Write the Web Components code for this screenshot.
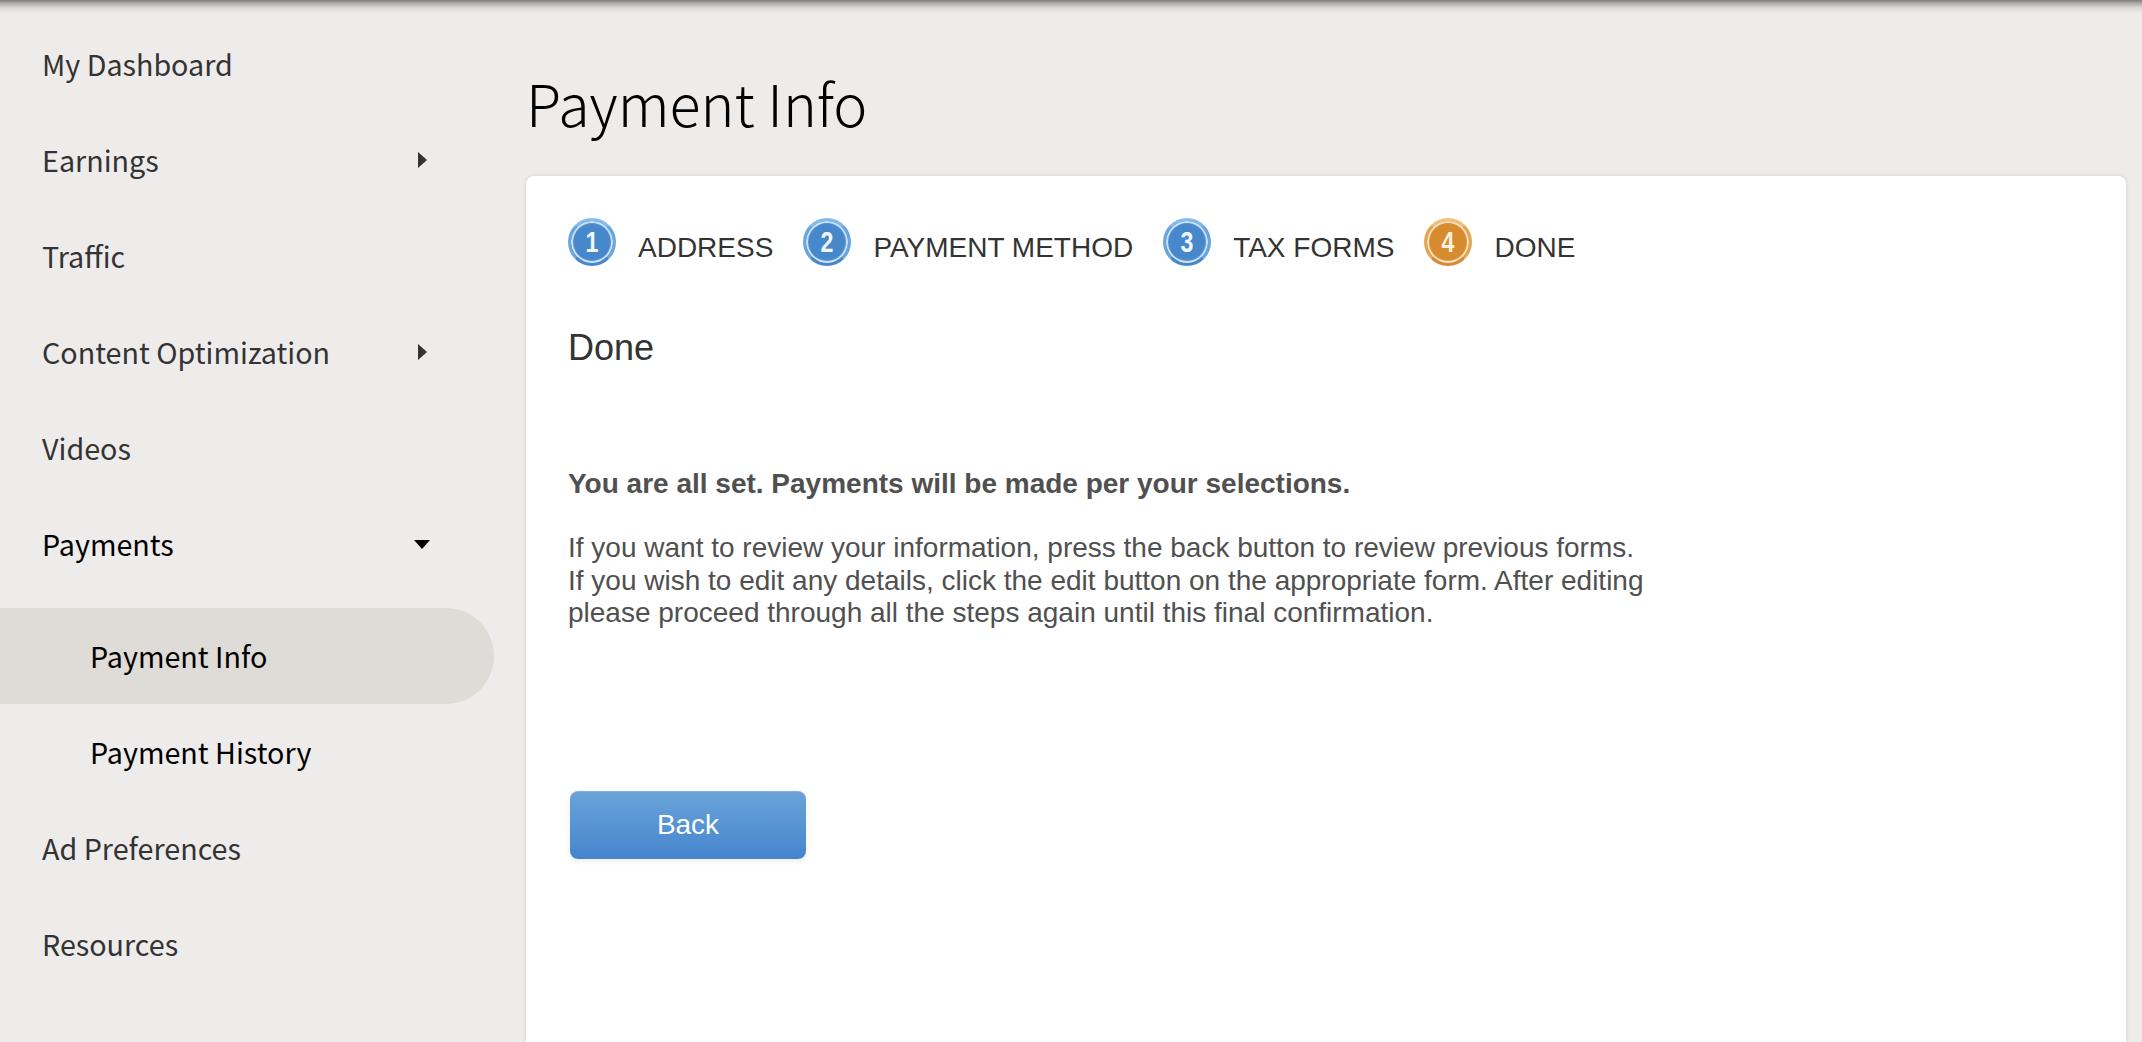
<!DOCTYPE html>
<html>
<head>
<meta charset="utf-8">
<title>Payment Info</title>
<style>
  html, body { margin: 0; height: 100%; overflow: hidden; background: #eeeceb; }
</style>
</head>
<body>
<app-shell>
  <side-nav slot="nav">
    <nav-item>My Dashboard</nav-item>
    <nav-item arrow="right">Earnings</nav-item>
    <nav-item>Traffic</nav-item>
    <nav-item arrow="right">Content Optimization</nav-item>
    <nav-item>Videos</nav-item>
    <nav-item arrow="down" open>Payments</nav-item>
    <nav-item sub active>Payment Info</nav-item>
    <nav-item sub>Payment History</nav-item>
    <nav-item>Ad Preferences</nav-item>
    <nav-item>Resources</nav-item>
  </side-nav>
  <page-title>Payment Info</page-title>
  <content-card>
    <step-bar>
      <step-item num="1">ADDRESS</step-item>
      <step-item num="2">PAYMENT METHOD</step-item>
      <step-item num="3">TAX FORMS</step-item>
      <step-item num="4" current>DONE</step-item>
    </step-bar>
    <done-message></done-message>
    <blue-button>Back</blue-button>
  </content-card>
</app-shell>
<script>
  function define(name, css, html, setup) {
    customElements.define(name, class extends HTMLElement {
      constructor() {
        super();
        const root = this.attachShadow({ mode: "open" });
        root.innerHTML = `<style>${css}</style>${html}`;
      }
      connectedCallback() {
        if (setup) setup(this);
      }
    });
  }

  define("app-shell", `
    :host { display: block; position: relative; height: 1042px; overflow: hidden; }
    .topshadow {
      position: absolute; left: 0; right: 0; top: 0; height: 14px;
      background: linear-gradient(#7d7d7d 0, #aaa9a8 3px, #dcdbda 8px, #eeeceb 14px);
    }
    .wrap { display: flex; height: 100%; }
    .side { width: 526px; flex: none; padding-top: 16px; box-sizing: border-box; }
    .main { flex: 1; padding-right: 16px; min-width: 0; }
  `, `
    <div class="topshadow"></div>
    <div class="wrap">
      <div class="side"><slot name="nav"></slot></div>
      <div class="main"><slot></slot></div>
    </div>
  `);

  define("side-nav", `:host { display: block; }`, `<slot></slot>`);

  define("nav-item", `
    :host {
      display: flex; align-items: center; justify-content: space-between;
      height: 96px; width: 494px; box-sizing: border-box;
      padding: 0 66px 2px 42px;
      font: 400 28.7px "Noto Sans CJK SC", "Open Sans", sans-serif;
      color: #333;
    }
    :host([open]) { color: #000; margin-bottom: 16px; }
    :host([sub]) { padding-left: 90px; color: #000; }
    :host([active]) { background: #dfdbd6; border-radius: 0 48px 48px 0; }
    .a { display: none; width: 0; height: 0; margin-top: 2px; border-style: solid; border-color: transparent; }
    :host([arrow="right"]) .a {
      display: block; border-width: 8px 0 8px 9px; border-left-color: #333; margin-right: 1px;
    }
    :host([arrow="down"]) .a {
      display: block; border-width: 9px 8px 0 8px; border-top-color: #000; margin-right: -2px;
    }
  `, `<slot></slot><span class="a"></span>`);

  define("page-title", `
    :host {
      display: flex; align-items: center; height: 176px; padding-top: 28px; box-sizing: border-box;
      font: 300 57.4px "Noto Sans CJK SC", "Open Sans", sans-serif; color: #000;
    }
  `, `<slot></slot>`);

  define("content-card", `
    :host {
      display: block; background: #fff; border-radius: 8px 8px 0 0; height: 866px;
      box-sizing: border-box; padding: 42px 42px 0 42px;
      box-shadow: 0 0 4px rgba(0,0,0,.12);
      font-family: "Liberation Sans", Arial, sans-serif;
    }
  `, `<slot></slot>`);

  define("step-bar", `
    :host { display: flex; align-items: center; gap: 30px; height: 48px; }
  `, `<slot></slot>`);

  define("step-item", `
    :host {
      display: flex; align-items: center; gap: 22px;
      font-size: 28px; color: #333; white-space: nowrap;
    }
    .dot {
      width: 48px; height: 48px; border-radius: 50%; box-sizing: border-box; flex: none;
      background: #4788cc;
      border: 3px solid; border-color: #86bcec #69a6e0 #4788cc;
      box-shadow: inset 0 0 1px 2px #d4e6f7;
      display: flex; align-items: center; justify-content: center;
      color: #f0f6fc; font: 700 29px/1 "Liberation Sans", sans-serif;
    }
    .dot b { display: block; transform: scaleX(.8); }
    :host([current]) .dot {
      background: #d68b2f; border-color: #eec27c #e3a650 #d68b2f;
      box-shadow: inset 0 0 1px 2px #f8e6c9;
      color: #fbf1e0;
    }
    .label { padding-top: 12px; }
  `, `<span class="dot"><b></b></span><span class="label"><slot></slot></span>`, el => {
    el.shadowRoot.querySelector("b").textContent = el.getAttribute("num");
  });

  define("done-message", `
    :host { display: block; color: #505050; font-size: 28px; line-height: 32.4px; }
    h2 { margin: 60px 0 0; font-weight: 400; font-size: 36px; line-height: 44px; color: #333; }
    .lead { margin: 98px 0 32px; font-weight: 700; }
    p { margin: 0; width: 1200px; }
  `, `
    <h2>Done</h2>
    <p class="lead">You are all set. Payments will be made per your selections.</p>
    <p>If you want to review your information, press the back button to review previous forms.<br>
    If you wish to edit any details, click the edit button on the appropriate form. After editing<br>
    please proceed through all the steps again until this final confirmation.</p>
  `);

  define("blue-button", `
    :host {
      display: flex; align-items: center; justify-content: center;
      width: 236px; height: 68px; margin: 161px 0 0 2px; box-sizing: border-box;
      border-radius: 8px; color: #fff; font-size: 28px;
      background: linear-gradient(#6aa3d9, #4585cc);
      border-top: 1px solid #7fb0de;
      box-shadow: 0 2px 6px rgba(0,0,0,.08);
    }
  `, `<slot></slot>`);
</script>
</body>
</html>
